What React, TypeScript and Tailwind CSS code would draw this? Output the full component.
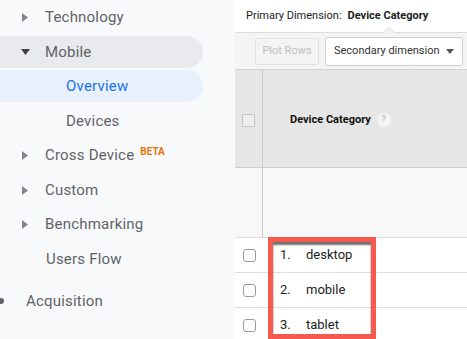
import React from "react";

const Tri = ({ down }: { down?: boolean }) =>
  down ? (
    <svg width="9" height="6" viewBox="0 0 9 6" className="block">
      <path d="M0 0 L9 0 L4.5 6 Z" fill="#3c4043" />
    </svg>
  ) : (
    <svg width="6" height="9" viewBox="0 0 6 9" className="block">
      <path d="M0 0 L6 4.5 L0 9 Z" fill="#80868b" />
    </svg>
  );

function NavItem({
  label,
  h,
  tri,
  down,
  indent,
  bg,
  color,
  mt,
  beta,
}: {
  label: string;
  h: string;
  tri?: boolean;
  down?: boolean;
  indent: string;
  bg?: string;
  color?: string;
  mt?: string;
  beta?: boolean;
}) {
  return (
    <div className={`relative flex items-center ${h} ${mt ?? ""} w-[203px] rounded-r-full ${bg ?? ""}`}>
      {tri && (
        <div className={down ? "absolute left-[21px]" : "absolute left-[22px]"}>
          <Tri down={down} />
        </div>
      )}
      <span className={`${indent} text-[15px] ${color ?? "text-[#5f6368]"} tracking-[0.2px]`}>{label}</span>
      {beta && (
        <span className="self-start mt-[6px] ml-[6px] text-[10px] font-bold text-[#e8710a]">BETA</span>
      )}
    </div>
  );
}

export default function App() {
  return (
    <div
      className="relative flex w-[467px] h-[339px] overflow-hidden bg-[#f8f9fa]"
      style={{ fontFamily: "Roboto, 'Liberation Sans', sans-serif" }}
    >
      {/* Sidebar */}
      <div className="w-[235px] shrink-0 flex flex-col bg-[#f8f9fa]">
        <NavItem label="Technology" h="h-[34px]" tri indent="pl-[45px]" />
        <NavItem label="Mobile" h="h-[32px]" mt="mt-[2px]" tri down indent="pl-[45px]" bg="bg-[#e8eaed]" />
        <NavItem label="Overview" h="h-[32px]" mt="mt-[2px]" indent="pl-[66px]" bg="bg-[#e8f0fe]" color="text-[#1a73e8]" />
        <NavItem label="Devices" h="h-[34px]" mt="mt-[2px]" indent="pl-[66px]" />
        <NavItem label="Cross Device" h="h-[34px]" tri indent="pl-[45px]" beta />
        <NavItem label="Custom" h="h-[34px]" mt="mt-[1px]" tri indent="pl-[45px]" />
        <NavItem label="Benchmarking" h="h-[34px]" tri indent="pl-[45px]" />
        <NavItem label="Users Flow" h="h-[34px]" mt="mt-[1px]" indent="pl-[46px]" />
        <div className="relative flex items-center h-[34px] mt-[8px]">
          <div className="absolute left-[-2px] w-[6px] h-[6px] rounded-full bg-[#5f6368]" />
          <span className="pl-[26px] text-[15px] text-[#5f6368] tracking-[0.2px]">Acquisition</span>
        </div>
      </div>

      {/* Main panel */}
      <div className="flex-1 min-w-0 flex flex-col bg-white">
        <div className="relative h-[33px] shrink-0 flex items-center pl-[11px] border-b border-[#dcdcdc] text-[11px] text-[#222] whitespace-nowrap">
          <span>Primary Dimension:</span>
          <span className="ml-[6px] font-bold">Device Category</span>
          <div className="absolute left-[148px] bottom-[-1px] w-0 h-0 border-l-[6px] border-r-[6px] border-b-[6px] border-l-transparent border-r-transparent border-b-[#dcdcdc]" />
          <div className="absolute left-[149px] bottom-[-1px] w-0 h-0 border-l-[5px] border-r-[5px] border-b-[5px] border-l-transparent border-r-transparent border-b-[#f4f4f4]" />
        </div>
        <div className="h-[36px] shrink-0 flex items-center bg-[#f4f4f4] pl-[20px] gap-[6px]">
          <div className="w-[64px] h-[27px] shrink-0 flex items-center justify-center border border-[#e0e0e0] rounded-[2px] text-[11px] text-[#c0c0c0] whitespace-nowrap">
            Plot Rows
          </div>
          <div className="w-[138px] h-[29px] shrink-0 flex items-center justify-between pl-[8px] pr-[8px] bg-white border border-[#cfcfcf] rounded-[3px] text-[11px] text-[#333] whitespace-nowrap">
            <span>Secondary dimension</span>
            <svg width="8" height="5" viewBox="0 0 8 5" className="shrink-0">
              <path d="M0 0 L8 0 L4 5 Z" fill="#555" />
            </svg>
          </div>
        </div>
        {/* table header */}
        <div className="h-[99px] shrink-0 flex bg-[#e6e6e6] border-t border-[#d4d4d4] border-b border-b-[#cccccc]">
          <div className="w-[28px] shrink-0 flex items-center justify-center border-r border-[#cccccc]">
            <div className="mt-[3px] w-[13px] h-[13px] border border-[#c8c8c8] bg-[#eeeeee]" />
          </div>
          <div className="flex items-center pl-[27px] gap-[6px] pt-[3px] whitespace-nowrap">
            <span className="text-[11px] font-bold text-[#111]">Device Category</span>
            <span className="w-[14px] h-[14px] rounded-full bg-[#f4f4f4] text-[9px] text-[#c4c4c4] font-bold flex items-center justify-center">?</span>
          </div>
        </div>
        <div className="h-[70px] shrink-0 flex bg-[#f8f8f8] border-b border-[#dddddd]">
          <div className="w-[28px] shrink-0 border-r border-[#cccccc]" />
        </div>
        {["desktop", "mobile", "tablet"].map((t, i) => (
          <div key={t} className="h-[35px] shrink-0 flex items-center border-b border-[#dddddd] bg-white">
            <div className="w-[28px] shrink-0 flex items-center justify-center">
              <div className="w-[13px] h-[13px] rounded-[3px] border border-[#9a9a9a] bg-white" />
            </div>
            <span className="ml-[17px] w-[26px] text-[13px] text-[#222]">{i + 1}.</span>
            <span className="text-[13px] text-[#222]">{t}</span>
          </div>
        ))}
      </div>

      {/* red annotation */}
      <div className="absolute left-[268px] top-[237px] w-[108px] h-[102px] border-[5px] border-[#f45b4e] shadow-[inset_0_3px_2px_rgba(60,60,60,0.75)]" />
    </div>
  );
}
